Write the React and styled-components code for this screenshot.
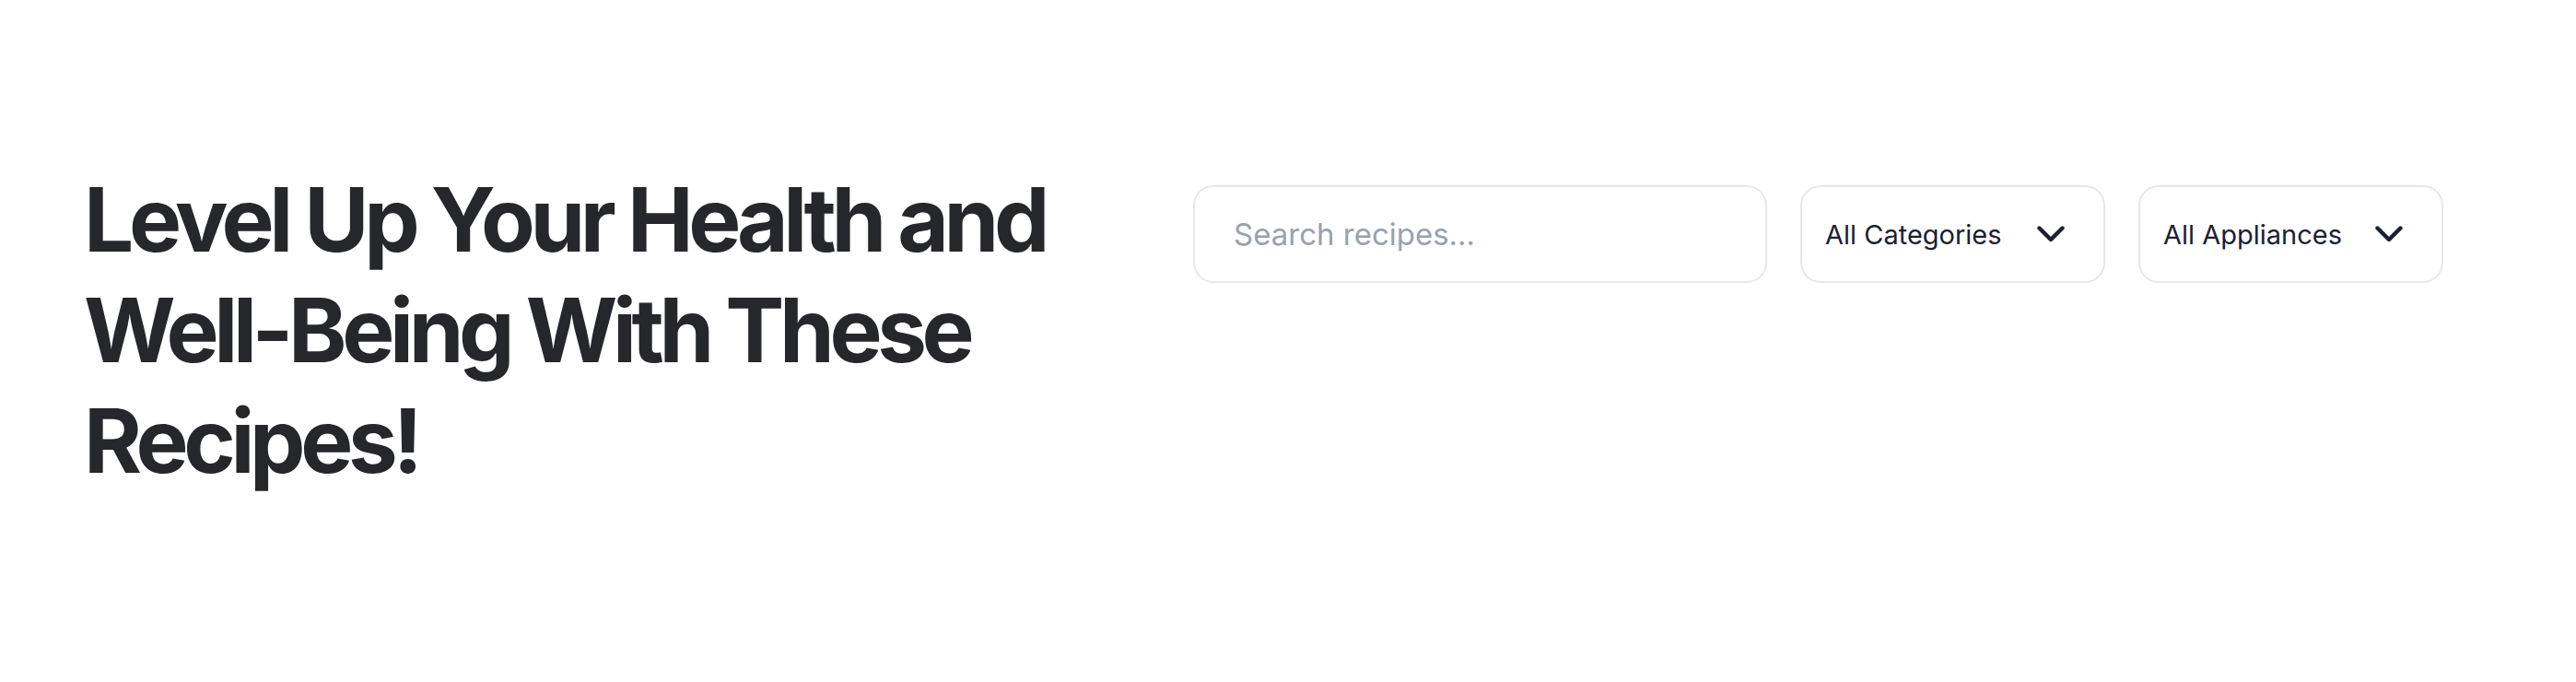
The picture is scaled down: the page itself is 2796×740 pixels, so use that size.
import React, { useState } from 'react'
import styled, { createGlobalStyle } from 'styled-components'

const GlobalStyle = createGlobalStyle`
  html, body {
    margin: 0;
    padding: 0;
    background: #ffffff;
  }
  body {
    font-family: Inter, "Noto Sans", sans-serif;
  }
`;

const Chevron = () => (
  <svg width="30" height="18" viewBox="0 0 30 18" fill="none">
    <path
      d="M2.5 2.5 L15 15 L27.5 2.5"
      stroke="#1c2130"
      strokeWidth="4.4"
      strokeLinecap="round"
      strokeLinejoin="round"
    />
  </svg>
);

const App = () => {
  const [query, setQuery] = useState("");

  return (
    <>
      <GlobalStyle />
      <Wrapper>
        <Title>Level Up Your Health and Well-Being With These Recipes!</Title>
        <Filters>
          <Search
            type="text"
            value={query}
            onChange={(e) => setQuery(e.target.value)}
            placeholder="Search recipes..."
          />
          <Select>
            <span>All Categories</span>
            <Chevron />
          </Select>
          <Select>
            <span>All Appliances</span>
            <Chevron />
          </Select>
        </Filters>
      </Wrapper>
    </>
  )
}

export default App

const Wrapper = styled.section`
  box-sizing: border-box;
  height: 740px;
  display: flex;
  justify-content: space-between;
  align-items: flex-start;
  padding: 178px 144px 0 91px;
`;

const Title = styled.h1`
  margin: 0;
  width: 1120px;
  font-family: Inter, sans-serif;
  font-size: 96px;
  line-height: 120px;
  font-weight: 700;
  letter-spacing: -0.056em;
  color: #25272b;
`;

const Filters = styled.div`
  display: flex;
  gap: 36px;
  margin-top: 23px;
  flex-shrink: 0;
`;

const Search = styled.input`
  box-sizing: border-box;
  width: 623px;
  height: 106px;
  padding: 0 42px;
  border: 2px solid #e6e7eb;
  border-radius: 22px;
  background: #fff;
  outline: none;
  font-family: Inter, sans-serif;
  font-size: 33px;
  color: #1c2130;
  &::placeholder {
    color: #9aa1ad;
  }
`;

const Select = styled.button`
  box-sizing: border-box;
  width: 331px;
  height: 106px;
  display: flex;
  align-items: center;
  justify-content: space-between;
  padding: 0 42px 0 25px;
  border: 2px solid #e6e7eb;
  border-radius: 22px;
  background: #fff;
  font-family: Inter, sans-serif;
  font-size: 29px;
  color: #1c2130;
  cursor: pointer;
`;
